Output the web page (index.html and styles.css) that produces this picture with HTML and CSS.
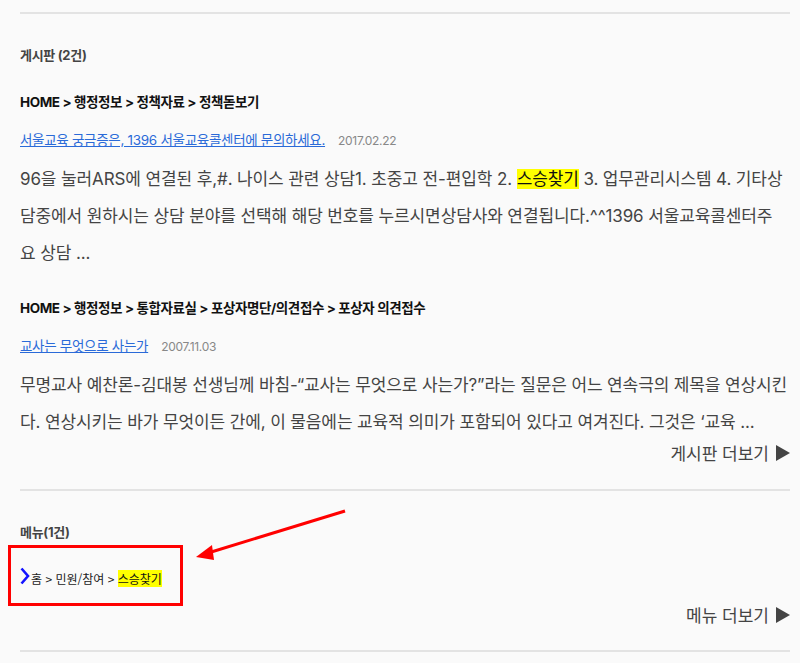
FILE: index.html
```html
<!DOCTYPE html>
<html lang="ko">
<head>
    <meta charset="UTF-8">
    <meta name="viewport" content="width=device-width, initial-scale=1.0">
    <title>통합검색 결과</title>
    <link rel="stylesheet" href="styles.css">
</head>
<body>
    <div class="result-wrap">
        <hr class="divider">

        <section class="result-group">
            <h3 class="group-title">게시판 (2건)</h3>

            <div class="item">
                <div class="item-path">HOME &gt; 행정정보 &gt; 정책자료 &gt; 정책돋보기</div>
                <div class="item-head">
                    <a href="#" class="item-link">서울교육 궁금증은, 1396 서울교육콜센터에 문의하세요.</a>
                    <span class="item-date">2017.02.22</span>
                </div>
                <p class="item-text">96을 눌러ARS에 연결된 후,#. 나이스 관련 상담1. 초중고 전-편입학 2. <mark>스승찾기</mark> 3. 업무관리시스템 4. 기타상담중에서 원하시는 상담 분야를 선택해 해당 번호를 누르시면상담사와 연결됩니다.^^1396 서울교육콜센터주<br>요 상담 ...</p>
            </div>

            <div class="item">
                <div class="item-path">HOME &gt; 행정정보 &gt; 통합자료실 &gt; 포상자명단/의견접수 &gt; 포상자 의견접수</div>
                <div class="item-head">
                    <a href="#" class="item-link">교사는 무엇으로 사는가</a>
                    <span class="item-date">2007.11.03</span>
                </div>
                <p class="item-text">무명교사 예찬론-김대봉 선생님께 바침-“교사는 무엇으로 사는가?”라는 질문은 어느 연속극의 제목을 연상시킨다. 연상시키는 바가 무엇이든 간에, 이 물음에는 교육적 의미가 포함되어 있다고 여겨진다. 그것은 ‘교육 ...</p>
            </div>

            <a href="#" class="more">게시판 더보기 <svg width="15" height="16" viewBox="0 0 15 16"><path d="M1 0 L15 8 L1 16 Z" fill="#444"/></svg></a>
        </section>

        <hr class="divider">

        <section class="result-group">
            <h3 class="group-title menu-title">메뉴(1건)</h3>
            <div class="menu-item">
                <svg class="chevron" width="10" height="18" viewBox="0 0 10 18"><path d="M1.5 1.5 L8 9 L1.5 16.5" fill="none" stroke="#1414ff" stroke-width="2.6"/></svg>
                <span>홈 &gt; 민원/참여 &gt; <mark>스승찾기</mark></span>
            </div>
            <a href="#" class="more more-menu">메뉴 더보기 <svg width="15" height="16" viewBox="0 0 15 16"><path d="M1 0 L15 8 L1 16 Z" fill="#444"/></svg></a>
        </section>

        <hr class="divider">
    </div>

    <!-- 안내용 표시 (빨간 박스 + 화살표) -->
    <svg class="annotation" width="800" height="663" viewBox="0 0 800 663">
        <rect x="9.5" y="546.5" width="172" height="58" fill="none" stroke="#f00" stroke-width="3"/>
        <line x1="345" y1="511" x2="208" y2="553" stroke="#f00" stroke-width="3"/>
        <path d="M196 557 L212 545 L214 560 Z" fill="#f00"/>
    </svg>
</body>
</html>
```

FILE: styles.css
```css
body {
    margin: 0;
    background-color: #fafafa;
    font-family: "Inter", "Noto Sans CJK KR", sans-serif;
    color: #444;
    position: relative;
}

.result-wrap {
    width: 770px;
    padding: 12px 0 0 20px;
}

.divider {
    margin: 0;
    border: none;
    height: 2px;
    background-color: #e3e3e3;
}

.group-title {
    margin: 31px 0 0;
    font-size: 13px;
    line-height: 20px;
    font-weight: 700;
    color: #444;
    letter-spacing: -0.3px;
}

.item-path {
    margin-top: 27px;
    font-size: 13.5px;
    line-height: 20px;
    font-weight: 700;
    color: #111;
    letter-spacing: -0.4px;
}

.item + .item .item-path {
    margin-top: 26px;
}

.item-head {
    margin-top: 18px;
    display: flex;
    align-items: baseline;
    gap: 13px;
    line-height: 20px;
}

.item-link {
    font-size: 13.5px;
    color: #2a6ad8;
    text-decoration: underline;
    letter-spacing: -0.3px;
}

.item-date {
    font-size: 12px;
    color: #888;
    letter-spacing: -0.3px;
}

.item-text {
    margin: 10px 0 0;
    font-size: 17px;
    line-height: 37px;
    color: #444;
    word-break: break-all;
    letter-spacing: -0.12px;
}

mark {
    background-color: #ffff00;
    color: #111;
}

.more {
    display: flex;
    justify-content: flex-end;
    align-items: center;
    gap: 6px;
    font-family: "Noto Sans CJK KR", sans-serif;
    font-size: 17px;
    line-height: 24px;
    color: #444;
    text-decoration: none;
    padding-bottom: 24px;
}

.menu-title {
    margin-top: 31px;
}

.menu-item {
    margin-top: 27px;
    display: flex;
    align-items: center;
    gap: 1px;
    font-family: "Noto Sans CJK KR", sans-serif;
    font-size: 12px;
    line-height: 20px;
    color: #222;
}

.chevron {
    margin-top: -6px;
}

.more-menu {
    margin-top: 14px;
    padding-bottom: 23px;
}

.annotation {
    position: absolute;
    left: 0;
    top: 0;
    pointer-events: none;
}
```
